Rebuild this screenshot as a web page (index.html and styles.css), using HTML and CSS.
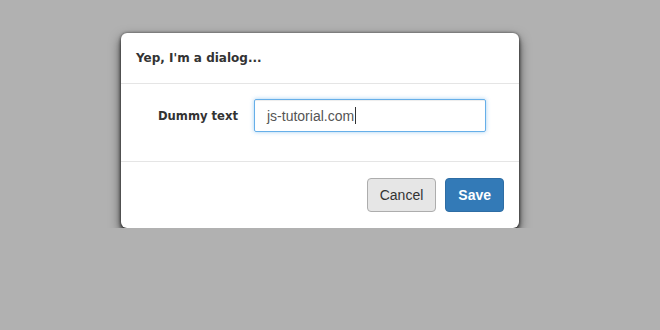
FILE: index.html
```html
<!DOCTYPE html>
<html lang="en">
<head>
  <meta charset="UTF-8" />
  <meta name="viewport" content="width=device-width, initial-scale=1.0" />
  <title>Dialog</title>
  <link rel="stylesheet" href="styles.css">
</head>
<body>

<div class="modal">
  <div class="modal-header">
    <h4 class="modal-title">Yep, I'm a dialog...</h4>
  </div>

  <div class="modal-body">
    <div class="form-row">
      <label class="form-label" for="dummy">Dummy text</label>
      <div class="input-box">
        <span class="input-text">js-tutorial.com</span><span class="caret"></span>
      </div>
    </div>
  </div>

  <div class="modal-footer">
    <button class="btn btn-default">Cancel</button>
    <button class="btn btn-primary">Save</button>
  </div>
</div>

</body>
</html>
```

FILE: styles.css
```css
body {
  margin: 0;
  padding: 33px 0 0 121px;
  background-color: #b1b1b1;
  font-family: "DejaVu Sans", Verdana, sans-serif;
  color: #333;
}
.modal {
  width: 398px;
  background-color: #fff;
  border-radius: 6px;
  box-shadow: 0 3px 4px rgba(0,0,0,0.55), 0 5px 12px rgba(0,0,0,0.6), 0 0 3px rgba(0,0,0,0.5);
}
.modal-header {
  height: 51px;
  box-sizing: border-box;
  padding: 0 15px;
  display: flex;
  align-items: center;
  border-bottom: 1px solid #e5e5e5;
}
.modal-title {
  margin: 0;
  font-size: 12px;
  font-weight: 700;
  color: #333;
}
.modal-body {
  padding: 15px 15px 29px;
  border-bottom: 1px solid #e5e5e5;
}
.form-row {
  display: flex;
  align-items: center;
}
.form-label {
  width: 118px;
  box-sizing: border-box;
  text-align: right;
  font-size: 11.6px;
  font-weight: 700;
  color: #333;
  padding-right: 16px;
}
.input-box {
  width: 232px;
  height: 33px;
  box-sizing: border-box;
  border: 1px solid #66afe9;
  border-radius: 2px;
  box-shadow: inset 0 1px 1px rgba(0,0,0,.075), 0 0 4px rgba(102,175,233,.6);
  padding: 0 12px;
  display: flex;
  align-items: center;
  font-family: "Liberation Sans", Arial, sans-serif;
  font-size: 14px;
  color: #555;
}
.caret {
  display: inline-block;
  width: 1px;
  height: 17px;
  background-color: #333;
  margin-left: 1px;
}
.modal-footer {
  padding: 16px 15px 16px;
  display: flex;
  justify-content: flex-end;
  gap: 9px;
}
.btn {
  height: 34px;
  padding: 0 12px;
  font-family: "Liberation Sans", Arial, sans-serif;
  font-size: 14px;
  border-radius: 4px;
  border: 1px solid transparent;
  cursor: pointer;
}
.btn-default {
  background-color: #e6e6e6;
  border-color: #adadad;
  color: #333;
}
.btn-primary {
  background-color: #337ab7;
  border-color: #2e6da4;
  color: #fff;
  font-weight: 700;
}
```
